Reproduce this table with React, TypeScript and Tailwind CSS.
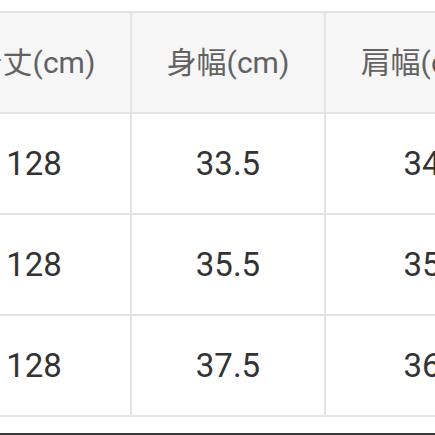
import React from "react";

const headers = ["着丈(cm)", "身幅(cm)", "肩幅(cm)"];

const rows = [
  ["128", "33.5", "34"],
  ["128", "35.5", "35"],
  ["128", "37.5", "36"],
];

const cell =
  "h-[101px] flex items-center justify-center border-r-2 border-b-2 border-[#e4e4e4] whitespace-nowrap overflow-hidden";

const App = () => {
  return (
    <div className="w-[435px] h-[435px] bg-white overflow-hidden flex flex-col">
      <div className="pt-[11px] flex-1">
        <div className="ml-[-62px] grid grid-cols-[194px_194px_194px] border-t-2 border-[#e4e4e4] w-max">
          {headers.map((h) => (
            <div
              key={h}
              className={`${cell} bg-[#f6f6f6] text-[30px] text-[#626262]`}
              style={{ fontFamily: 'Roboto, "Noto Sans CJK JP", sans-serif' }}
            >
              {h}
            </div>
          ))}
          {rows.map((r, i) =>
            r.map((v, j) => (
              <div
                key={`${i}-${j}`}
                className={`${cell} bg-white text-[33px] text-[#333333]`}
                style={{ fontFamily: 'Roboto, "Noto Sans CJK JP", sans-serif' }}
              >
                {v}
              </div>
            ))
          )}
        </div>
      </div>
      <div className="h-[2px] bg-[#3a3a3a]" />
    </div>
  );
};

export default App;
